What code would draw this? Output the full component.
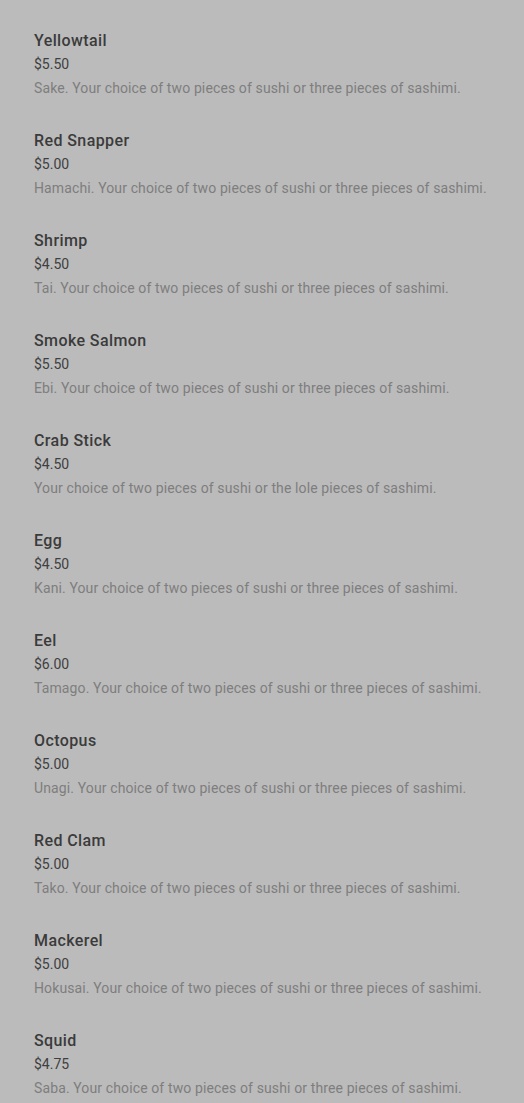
const items = [
  { name: "Yellowtail", price: "$5.50", desc: "Sake. Your choice of two pieces of sushi or three pieces of sashimi." },
  { name: "Red Snapper", price: "$5.00", desc: "Hamachi. Your choice of two pieces of sushi or three pieces of sashimi." },
  { name: "Shrimp", price: "$4.50", desc: "Tai. Your choice of two pieces of sushi or three pieces of sashimi." },
  { name: "Smoke Salmon", price: "$5.50", desc: "Ebi. Your choice of two pieces of sushi or three pieces of sashimi." },
  { name: "Crab Stick", price: "$4.50", desc: "Your choice of two pieces of sushi or the lole pieces of sashimi." },
  { name: "Egg", price: "$4.50", desc: "Kani. Your choice of two pieces of sushi or three pieces of sashimi." },
  { name: "Eel", price: "$6.00", desc: "Tamago. Your choice of two pieces of sushi or three pieces of sashimi." },
  { name: "Octopus", price: "$5.00", desc: "Unagi. Your choice of two pieces of sushi or three pieces of sashimi." },
  { name: "Red Clam", price: "$5.00", desc: "Tako. Your choice of two pieces of sushi or three pieces of sashimi." },
  { name: "Mackerel", price: "$5.00", desc: "Hokusai. Your choice of two pieces of sushi or three pieces of sashimi." },
  { name: "Squid", price: "$4.75", desc: "Saba. Your choice of two pieces of sushi or three pieces of sashimi." },
];

export default function App() {
  return (
    <div className="min-h-screen bg-[#bbbbbb] px-[34px] pt-[28px] font-['Roboto',sans-serif]">
      {items.map((item) => (
        <div key={item.name} className="pb-[28px]">
          <h3 className="pt-px text-[16px] leading-[24px] font-medium tracking-[0.4px] text-[#3b3b3b]">{item.name}</h3>
          <div className="-mt-px text-[14px] leading-[24px] text-[#3f3f3f]">{item.price}</div>
          <p className="text-[14px] leading-[24px] tracking-[0.12px] text-[#7e7e7e]">{item.desc}</p>
        </div>
      ))}
    </div>
  );
}
